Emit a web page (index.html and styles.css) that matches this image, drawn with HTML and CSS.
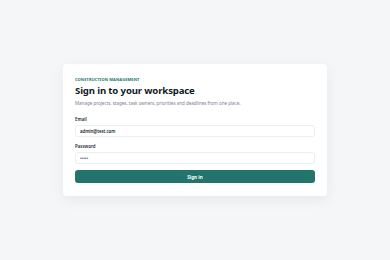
FILE: index.html
```html
<!DOCTYPE html>
<html lang="en">
<head>
    <meta charset="UTF-8">
    <meta name="viewport" content="width=device-width, initial-scale=1.0">
    <title>Sign in</title>
    <link rel="stylesheet" href="styles.css">
</head>
<body>
    <div class="page">
        <form class="login-card">
            <p class="eyebrow">Construction Management</p>
            <h1>Sign in to your workspace</h1>
            <p class="subtitle">Manage projects, stages, task owners, priorities and deadlines from one place.</p>

            <label class="field">
                <span class="field-label">Email</span>
                <input class="field-input" type="text" value="admin@test.com">
            </label>

            <label class="field">
                <span class="field-label">Password</span>
                <input class="field-input" type="password" value="admin">
            </label>

            <button class="submit" type="button">Sign in</button>
        </form>
    </div>
</body>
</html>
```

FILE: styles.css
```css
* {
    box-sizing: border-box;
}

body {
    margin: 0;
    background: #f4f6f8;
    color: #111827;
    font-family: 'Noto Sans', 'Open Sans', sans-serif;
}

.page {
    height: 260px;
    display: flex;
    align-items: center;
    justify-content: center;
}

.login-card {
    width: 264px;
    height: 132px;
    background: #fff;
    border-radius: 4px;
    padding: 12px;
    box-shadow: 0 4px 14px rgba(15, 23, 42, 0.06);
    display: flex;
    flex-direction: column;
}

.eyebrow {
    margin: 1px 0 0;
    color: #23756b;
    font-size: 4px;
    line-height: 5px;
    font-weight: 700;
    letter-spacing: 0.1px;
    text-transform: uppercase;
}

h1 {
    margin: 2px 0 0;
    font-size: 9.6px;
    line-height: 13px;
    font-weight: 700;
    letter-spacing: -0.15px;
}

.subtitle {
    margin: 3px 0 0;
    color: #7b8190;
    font-size: 4.5px;
    line-height: 7px;
}

.field {
    display: flex;
    flex-direction: column;
    margin-top: 9px;
}

.field + .field {
    margin-top: 6px;
}

.field-label {
    font-size: 4.4px;
    line-height: 6px;
    font-weight: 600;
    color: #1f2937;
}

.field-input {
    margin-top: 3px;
    height: 12px;
    border: 1px solid #eceef2;
    border-radius: 3px;
    padding: 0 4px;
    font-family: inherit;
    font-size: 4.3px;
    font-weight: 600;
    color: #111827;
    outline: none;
}

.field-input[type="password"] {
    color: #6b7280;
}

.submit {
    margin-top: 6px;
    height: 13px;
    border: none;
    border-radius: 3px;
    background: #23756b;
    color: #fff;
    font-family: inherit;
    font-size: 4.6px;
    font-weight: 700;
}
```
